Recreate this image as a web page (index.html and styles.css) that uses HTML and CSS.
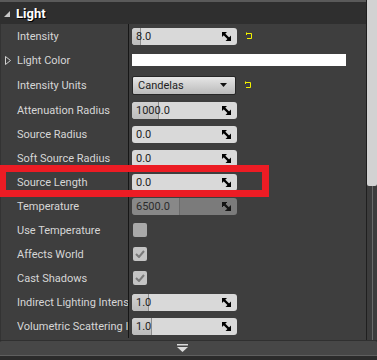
FILE: index.html
```html
<!DOCTYPE html>
<html lang="en">
<head>
    <meta charset="UTF-8">
    <title>Details - Light</title>
    <link rel="stylesheet" href="styles.css">
</head>
<body>
    <div class="panel">
        <div class="main">
            <div class="details">
                <div class="topline"></div>
                <div class="cat-head">
                    <svg class="cat-arrow" width="6" height="6" viewBox="0 0 6 6"><polygon points="6,0 6,6 0,6" fill="#c8c8c8"/></svg>
                    <span>Light</span>
                </div>
                <div class="rows">
                    <div class="row">
                        <div class="name">Intensity</div>
                        <div class="value">
                            <div class="num"><div class="fill" style="width: 9px"></div><span>8.0</span><svg class="drag" width="9" height="9" viewBox="0 0 9 9"><polygon points="0,0 5,0 0,5"/><polygon points="9,9 3.5,9 9,3.5"/><line x1="1" y1="1" x2="7" y2="7"/></svg></div>
                            <svg class="reset" width="8" height="8" viewBox="0 0 8 8"><path d="M1.5 0.5 V3 M1.5 1.5 H6.5 V6.5 H2"/></svg>
                        </div>
                    </div>
                    <div class="row">
                        <div class="name"><svg class="expand" width="6" height="9" viewBox="0 0 6 9"><polygon points="0.5,0.5 5.5,4.5 0.5,8.5"/></svg>Light Color</div>
                        <div class="value"><div class="color"></div></div>
                    </div>
                    <div class="row tall">
                        <div class="name">Intensity Units</div>
                        <div class="value">
                            <div class="combo"><span>Candelas</span><svg width="7" height="4" viewBox="0 0 7 4"><polygon points="0,0 7,0 3.5,4" fill="#111"/></svg></div>
                            <svg class="reset" width="8" height="8" viewBox="0 0 8 8"><path d="M1.5 0.5 V3 M1.5 1.5 H6.5 V6.5 H2"/></svg>
                        </div>
                    </div>
                    <div class="row">
                        <div class="name">Attenuation Radius</div>
                        <div class="value"><div class="num"><div class="fill" style="width: 27px"></div><span>1000.0</span><svg class="drag" width="9" height="9" viewBox="0 0 9 9"><polygon points="0,0 5,0 0,5"/><polygon points="9,9 3.5,9 9,3.5"/><line x1="1" y1="1" x2="7" y2="7"/></svg></div></div>
                    </div>
                    <div class="row">
                        <div class="name">Source Radius</div>
                        <div class="value"><div class="num"><span>0.0</span><svg class="drag" width="9" height="9" viewBox="0 0 9 9"><polygon points="0,0 5,0 0,5"/><polygon points="9,9 3.5,9 9,3.5"/><line x1="1" y1="1" x2="7" y2="7"/></svg></div></div>
                    </div>
                    <div class="row">
                        <div class="name">Soft Source Radius</div>
                        <div class="value"><div class="num"><span>0.0</span><svg class="drag" width="9" height="9" viewBox="0 0 9 9"><polygon points="0,0 5,0 0,5"/><polygon points="9,9 3.5,9 9,3.5"/><line x1="1" y1="1" x2="7" y2="7"/></svg></div></div>
                    </div>
                    <div class="row">
                        <div class="name">Source Length</div>
                        <div class="value"><div class="num"><span>0.0</span><svg class="drag" width="9" height="9" viewBox="0 0 9 9"><polygon points="0,0 5,0 0,5"/><polygon points="9,9 3.5,9 9,3.5"/><line x1="1" y1="1" x2="7" y2="7"/></svg></div></div>
                    </div>
                    <div class="row">
                        <div class="name">Temperature</div>
                        <div class="value"><div class="num disabled"><div class="fill" style="width: 48px"></div><span>6500.0</span><svg class="drag" width="9" height="9" viewBox="0 0 9 9"><polygon points="0,0 5,0 0,5"/><polygon points="9,9 3.5,9 9,3.5"/><line x1="1" y1="1" x2="7" y2="7"/></svg></div></div>
                    </div>
                    <div class="row">
                        <div class="name">Use Temperature</div>
                        <div class="value"><div class="check"></div></div>
                    </div>
                    <div class="row">
                        <div class="name">Affects World</div>
                        <div class="value"><div class="check on"><svg width="10" height="8" viewBox="0 0 10 8"><path d="M1 4 L4 7 L9 1"/></svg></div></div>
                    </div>
                    <div class="row">
                        <div class="name">Cast Shadows</div>
                        <div class="value"><div class="check on"><svg width="10" height="8" viewBox="0 0 10 8"><path d="M1 4 L4 7 L9 1"/></svg></div></div>
                    </div>
                    <div class="row">
                        <div class="name"><span class="label">Indirect Lighting Intensity</span></div>
                        <div class="value"><div class="num"><div class="fill" style="width: 17px"></div><span>1.0</span><svg class="drag" width="9" height="9" viewBox="0 0 9 9"><polygon points="0,0 5,0 0,5"/><polygon points="9,9 3.5,9 9,3.5"/><line x1="1" y1="1" x2="7" y2="7"/></svg></div></div>
                    </div>
                    <div class="row">
                        <div class="name"><span class="label">Volumetric Scattering Intensity</span></div>
                        <div class="value"><div class="num"><div class="fill" style="width: 20px"></div><span>1.0</span><svg class="drag" width="9" height="9" viewBox="0 0 9 9"><polygon points="0,0 5,0 0,5"/><polygon points="9,9 3.5,9 9,3.5"/><line x1="1" y1="1" x2="7" y2="7"/></svg></div></div>
                    </div>
                </div>
            </div>
            <div class="scrollbar"><div class="thumb"></div></div>
        </div>
        <div class="more-bar">
            <svg width="11" height="8" viewBox="0 0 11 8"><rect x="0" y="0" width="11" height="1.5" fill="#dcdcdc"/><polygon points="0,3 11,3 5.5,8" fill="#dcdcdc"/></svg>
        </div>
        <div class="tail"></div>
    </div>
    <div class="highlight"></div>
</body>
</html>
```

FILE: styles.css
```css
body {
    margin: 0;
    width: 377px;
    height: 360px;
    overflow: hidden;
    background-color: #2b2b2b;
    font-family: Roboto, "Liberation Sans", sans-serif;
    position: relative;
}

.panel {
    display: flex;
    flex-direction: column;
    height: 360px;
}

.main {
    display: flex;
    height: 340px;
}

.details {
    flex: 1;
    display: flex;
    flex-direction: column;
}

.topline {
    height: 2px;
    background-color: #5a5a5a;
}

.cat-head {
    height: 22px;
    background-color: #2f2f2f;
    display: flex;
    align-items: center;
    padding-left: 4px;
    gap: 6px;
    color: #fff;
    font-size: 13px;
    font-weight: bold;
    text-shadow: 1px 1px 0 #000;
}

.cat-arrow {
    margin-top: 1px;
}

.rows {
    flex: 1;
    background-color: #3e3e3e;
    border-left: 1px solid #333;
    padding-bottom: 2px;
}

.row {
    display: grid;
    grid-template-columns: 128px 1fr;
    height: 24px;
}

.row.tall {
    height: 26px;
}

.name {
    border-right: 1px solid #161616;
    display: flex;
    align-items: center;
    padding-left: 16px;
    font-size: 11px;
    color: #d6d6d6;
    white-space: nowrap;
    overflow: hidden;
    position: relative;
}

.name .label {
    overflow: hidden;
}

.expand {
    position: absolute;
    left: 4px;
    top: 8px;
}

.expand polygon {
    fill: none;
    stroke: #d0d0d0;
    stroke-width: 1;
}

.value {
    display: flex;
    align-items: center;
    padding-left: 3px;
    gap: 8px;
}

.num {
    position: relative;
    width: 105px;
    height: 17px;
    box-sizing: border-box;
    background-color: #d9d9d9;
    border-radius: 3px;
    display: flex;
    align-items: center;
    padding: 0 6px 0 4px;
    font-size: 11px;
    color: #1e1e1e;
    overflow: hidden;
}

.num .fill {
    position: absolute;
    left: 0;
    top: 0;
    bottom: 0;
    background: linear-gradient(#d2d2d2, #bdbdbd);
    border-right: 1px solid #8e8e8e;
    border-radius: 3px 0 0 3px;
    box-sizing: border-box;
}

.num span {
    position: relative;
}

.drag {
    margin-left: auto;
    position: relative;
}

.drag polygon {
    fill: #000;
}

.drag line {
    stroke: #000;
    stroke-width: 2.4;
}

.num.disabled {
    background-color: #7b7b7b;
    color: #2c2c2c;
}

.num.disabled .fill {
    background: #888;
    border-right: 1px solid #6c6c6c;
}

.num.disabled .drag polygon,
.num.disabled .drag line {
    fill: #151515;
    stroke: #151515;
}

.reset path {
    fill: none;
    stroke: #f0f000;
    stroke-width: 1;
}

.color {
    width: 214px;
    height: 12px;
    background-color: #fff;
}

.combo {
    width: 104px;
    height: 19px;
    box-sizing: border-box;
    border: 1px solid #262626;
    border-radius: 2px;
    background: linear-gradient(#e6e6e6, #bababa);
    display: flex;
    align-items: center;
    justify-content: space-between;
    padding: 0 8px 0 5px;
    font-size: 11px;
    color: #1e1e1e;
}

.check {
    width: 14px;
    height: 14px;
    margin-left: 1px;
    border-radius: 2px;
    background-color: #a9a9a9;
    display: flex;
    align-items: center;
    justify-content: center;
}

.check.on {
    background-color: #c4c4c4;
}

.check path {
    fill: none;
    stroke: #7a7a7a;
    stroke-width: 2;
}

.scrollbar {
    width: 10px;
    border-left: 1px solid #1f1f1f;
    background: linear-gradient(to right, #3c3c3c 5px, #6a6a6a 5px, #6a6a6a 6px, #3c3c3c 6px);
}

.thumb {
    height: 186px;
    background-color: #d2d2d2;
    border-radius: 0 0 2px 2px;
}

.more-bar {
    height: 14px;
    border-top: 1px solid #303030;
    border-bottom: 1px solid #5f5f5f;
    background-color: #474747;
    border-radius: 2px 2px 0 0;
    display: flex;
    align-items: center;
    justify-content: center;
    padding-right: 12px;
}

.tail {
    flex: 1;
}

.highlight {
    position: absolute;
    left: -1px;
    top: 165px;
    width: 270px;
    height: 32px;
    box-sizing: border-box;
    border: 7px solid #ec1c24;
}
```
